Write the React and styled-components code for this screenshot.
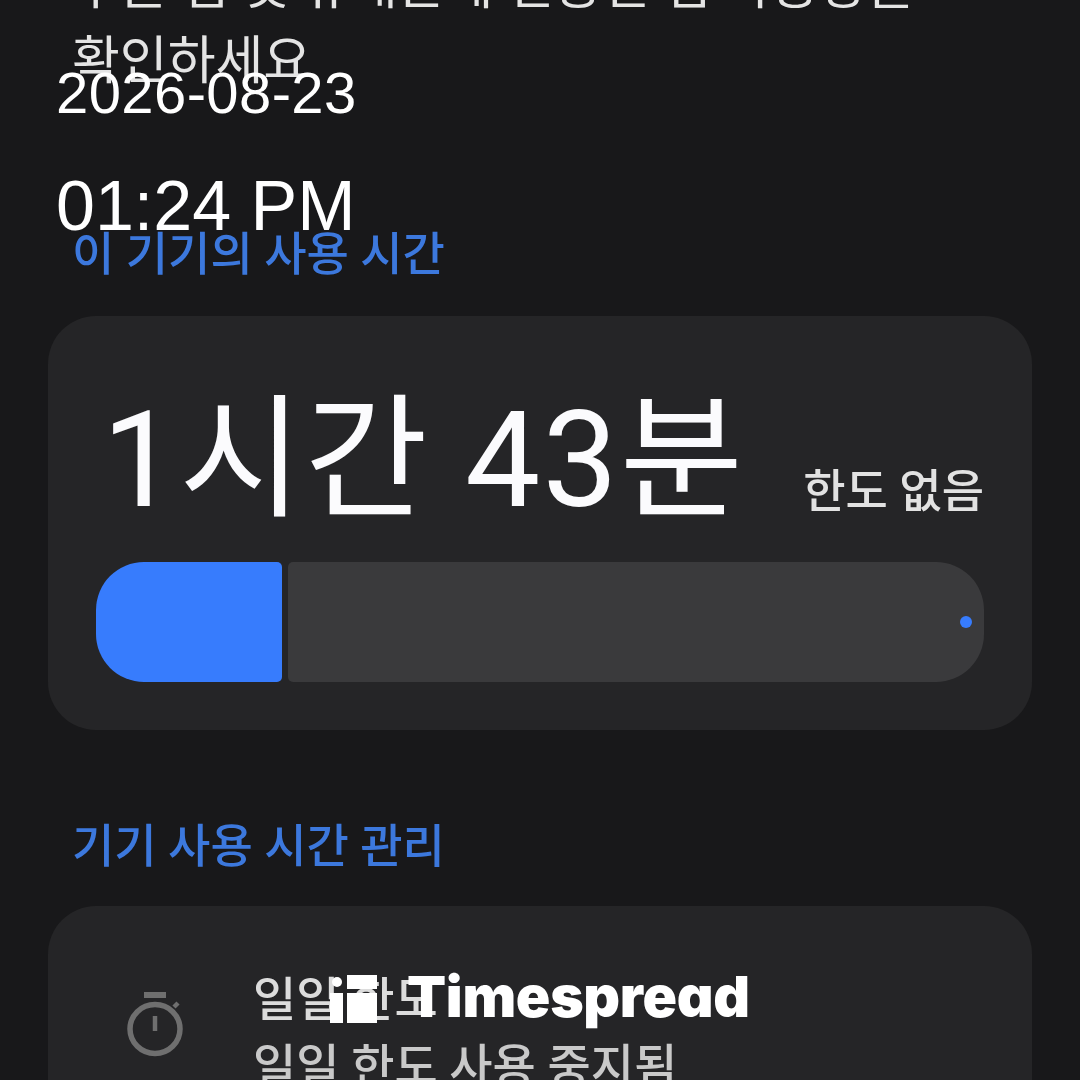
import React from "react";
import styled, { createGlobalStyle } from "styled-components";

const Global = createGlobalStyle`
  html, body { margin: 0; padding: 0; background: #18181a; }
`;

const KR = `Roboto, "Noto Sans CJK KR", "Noto Sans", sans-serif`;

const Screen = styled.div`
  position: relative;
  width: 1080px;
  height: 1080px;
  overflow: hidden;
  background: #18181a;
  font-family: ${KR};
`;

const Content = styled.main`
  display: flex;
  flex-direction: column;
  margin-top: -51px;
  padding: 0 48px;
  filter: blur(0.5px);
`;

const Intro = styled.p`
  margin: 0 0 121px;
  padding: 0 0 0 24px;
  font-size: 52px;
  line-height: 75px;
  color: #e4e4e4;
  white-space: pre;
`;

const SectionLabel = styled.h2`
  margin: 0 0 ${(p) => p.$after}px;
  padding-left: 24px;
  font-size: 46px;
  line-height: 68px;
  font-weight: 500;
  color: #3c78dd;
`;

const Card = styled.section`
  background: #252527;
  border-radius: 48px;
  margin-bottom: ${(p) => p.$after || 0}px;
`;

const UsageCard = styled(Card)`
  height: 414px;
  box-sizing: border-box;
  padding: 60px 48px 0;
  display: flex;
  flex-direction: column;
`;

const UsageHead = styled.div`
  display: flex;
  align-items: flex-end;
  justify-content: space-between;
  height: 186px;
  padding-left: 6px;
`;

const BigTime = styled.div`
  font-size: 134px;
  line-height: 160px;
  letter-spacing: 2px;
  color: #fbfbfd;
  white-space: nowrap;
  padding-bottom: 21px;
`;

const LimitNote = styled.div`
  font-size: 46px;
  line-height: 60px;
  font-weight: 500;
  color: #e2e2e2;
  padding-bottom: 41px;
`;

const Bar = styled.div`
  display: flex;
  gap: 6px;
  height: 120px;
`;

const BarFill = styled.div`
  width: 186px;
  background: #377cfd;
  border-radius: 48px 5px 5px 48px;
`;

const BarTrack = styled.div`
  flex: 1;
  background: #3a3a3c;
  border-radius: 5px 48px 48px 5px;
  display: flex;
  align-items: center;
  justify-content: flex-end;
  padding-right: 12px;
`;

const BarDot = styled.span`
  width: 12px;
  height: 12px;
  border-radius: 50%;
  background: #377cfd;
`;

const LimitCard = styled(Card)`
  height: 300px;
`;

const LimitRow = styled.div`
  display: flex;
  align-items: flex-start;
  padding: 60px 0 0 78px;
  gap: 69px;
`;

const RowText = styled.div`
  display: flex;
  flex-direction: column;
`;

const RowTitle = styled.div`
  font-size: 47px;
  line-height: 67px;
  font-weight: 500;
  color: #dcdcdc;
`;

const RowSub = styled.div`
  font-size: 47px;
  line-height: 67px;
  font-weight: 500;
  color: #c9c9c9;
`;

const Stopwatch = styled.svg`
  flex: none;
  width: 58px;
  height: 66px;
  margin-top: 26px;
  color: #6f6f6f;
`;

const Stamp = styled.div`
  position: absolute;
  left: 56px;
  top: 57px;
  font-family: "Liberation Sans", Arial, sans-serif;
  color: #fff;
  display: flex;
  flex-direction: column;
`;

const StampDate = styled.span`
  font-size: 58px;
  line-height: 72px;
  letter-spacing: 0.4px;
`;

const StampTime = styled.span`
  margin-top: 37px;
  font-size: 70px;
  line-height: 80px;
`;

const Brand = styled.div`
  position: absolute;
  left: 330px;
  top: 975px;
  display: flex;
  align-items: flex-start;
`;

const BrandMark = styled.svg`
  flex: none;
  width: 48px;
  height: 48px;
`;

const BrandName = styled.span`
  margin-left: 29px;
  margin-top: -14px;
  font-family: Inter, "Liberation Sans", sans-serif;
  font-weight: 900;
  font-size: 57px;
  line-height: 72px;
  letter-spacing: -0.3px;
  color: #fff;
  font-feature-settings: "cv11" 1;
`;

export default function App() {
  return (
    <Screen>
      <Global />
      <Content>
        <Intro>{"구글 앱 및 휴대폰에 연동된 앱 사용량을\n확인하세요"}</Intro>
        <SectionLabel $after={28}>이 기기의 사용 시간</SectionLabel>
        <UsageCard $after={82}>
          <UsageHead>
            <BigTime>1시간 43분</BigTime>
            <LimitNote>한도 없음</LimitNote>
          </UsageHead>
          <Bar>
            <BarFill />
            <BarTrack>
              <BarDot />
            </BarTrack>
          </Bar>
        </UsageCard>
        <SectionLabel $after={26}>기기 사용 시간 관리</SectionLabel>
        <LimitCard>
          <LimitRow>
            <Stopwatch viewBox="0 0 58 66" fill="none" stroke="currentColor" strokeWidth="5.5">
              <path d="M18 3h22" strokeWidth="6" />
              <ellipse cx="29" cy="37" rx="25" ry="24.5" />
              <path d="M29 24v15" strokeWidth="4.5" />
              <path d="M48 15l4-4" strokeWidth="4.5" />
            </Stopwatch>
            <RowText>
              <RowTitle>일일 한도</RowTitle>
              <RowSub>일일 한도 사용 중지됨</RowSub>
            </RowText>
          </LimitRow>
        </LimitCard>
      </Content>
      <Stamp>
        <StampDate>2026-08-23</StampDate>
        <StampTime>01:24 PM</StampTime>
      </Stamp>
      <Brand>
        <BrandMark viewBox="0 0 48 48" fill="#fff">
          <circle cx="7" cy="7" r="5" />
          <rect x="0" y="18" width="13" height="30" />
          <rect x="17" y="0" width="30" height="14" />
          <rect x="17" y="18" width="30" height="30" />
        </BrandMark>
        <BrandName>Timespread</BrandName>
      </Brand>
    </Screen>
  );
}
